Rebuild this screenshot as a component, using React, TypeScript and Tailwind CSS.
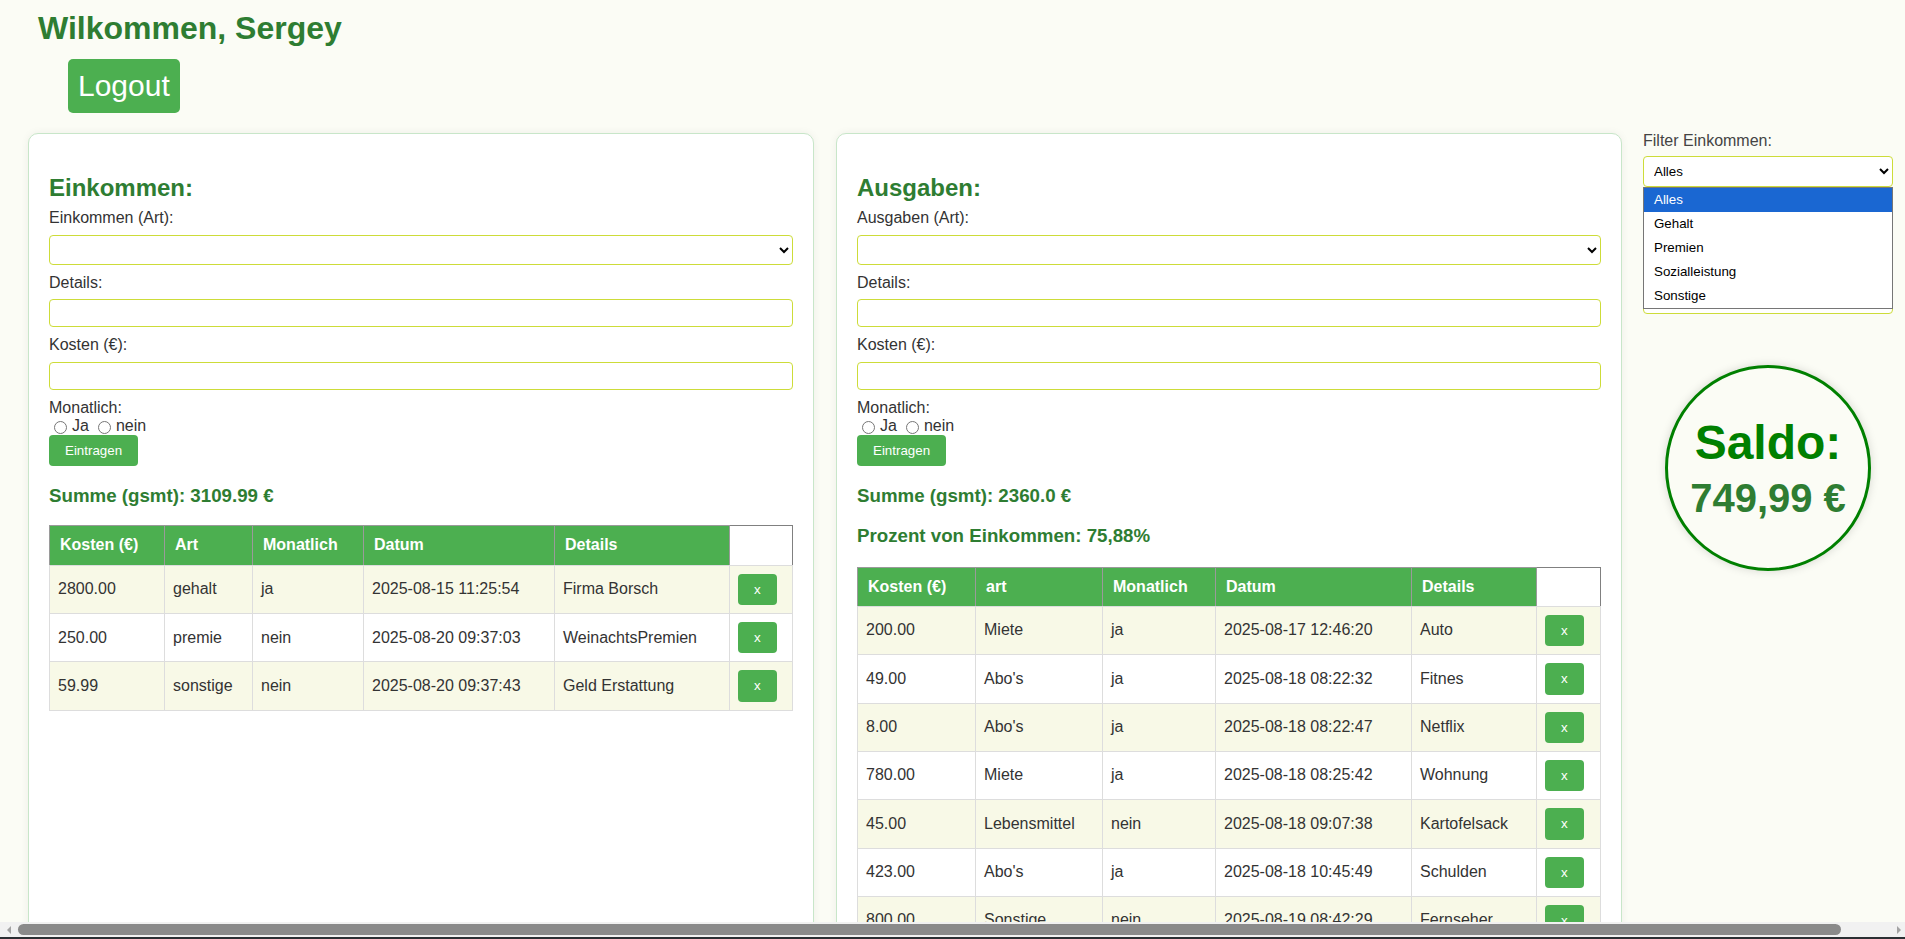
import React from 'react'

const einkommen = [
  { kosten: '2800.00', art: 'gehalt', monatlich: 'ja', datum: '2025-08-15 11:25:54', details: 'Firma Borsch' },
  { kosten: '250.00', art: 'premie', monatlich: 'nein', datum: '2025-08-20 09:37:03', details: 'WeinachtsPremien' },
  { kosten: '59.99', art: 'sonstige', monatlich: 'nein', datum: '2025-08-20 09:37:43', details: 'Geld Erstattung' },
]

const ausgaben = [
  { kosten: '200.00', art: 'Miete', monatlich: 'ja', datum: '2025-08-17 12:46:20', details: 'Auto' },
  { kosten: '49.00', art: "Abo's", monatlich: 'ja', datum: '2025-08-18 08:22:32', details: 'Fitnes' },
  { kosten: '8.00', art: "Abo's", monatlich: 'ja', datum: '2025-08-18 08:22:47', details: 'Netflix' },
  { kosten: '780.00', art: 'Miete', monatlich: 'ja', datum: '2025-08-18 08:25:42', details: 'Wohnung' },
  { kosten: '45.00', art: 'Lebensmittel', monatlich: 'nein', datum: '2025-08-18 09:07:38', details: 'Kartofelsack' },
  { kosten: '423.00', art: "Abo's", monatlich: 'ja', datum: '2025-08-18 10:45:49', details: 'Schulden' },
  { kosten: '800.00', art: 'Sonstige', monatlich: 'nein', datum: '2025-08-19 08:42:29', details: 'Fernseher' },
  { kosten: '55.00', art: 'Sonstige', monatlich: 'nein', datum: '2025-08-19 09:10:12', details: 'Geschenk' },
]

type Row = { kosten: string; art: string; monatlich: string; datum: string; details: string }

function EntryForm({ title, artLabel }: { title: string; artLabel: string }) {
  return (
    <>
      <h2 className="mt-[20px] mb-[8px] text-[24px] leading-[27.6px] font-bold text-[#2e7d32]">{title}</h2>
      <label className="block text-[16px] leading-[18.4px] text-[#333]">{artLabel}</label>
      <select className="block w-full h-[30px] mt-[7px] mb-[9px] border border-[#cddc39] rounded-[4px] bg-white text-[13.33px] px-[4px]">
        <option value=""></option>
      </select>
      <label className="block text-[16px] leading-[18.4px] text-[#333]">Details:</label>
      <input type="text" className="block w-full h-[28px] mt-[7px] mb-[9px] border border-[#cddc39] rounded-[4px] bg-white px-[6px]" />
      <label className="block text-[16px] leading-[18.4px] text-[#333]">Kosten (€):</label>
      <input type="text" className="block w-full h-[28px] mt-[7px] mb-[9px] border border-[#cddc39] rounded-[4px] bg-white px-[6px]" />
      <label className="block text-[16px] leading-[18.4px] text-[#333]">Monatlich:</label>
      <div className="flex items-center h-[18.4px] text-[16px] text-[#333]">
        <input type="radio" name={title} className="ml-[5px] mr-[5px] mt-[2px] w-[13px] h-[13px]" />
        Ja
        <input type="radio" name={title} className="ml-[9px] mr-[5px] mt-[2px] w-[13px] h-[13px]" />
        nein
      </div>
      <button className="h-[31px] px-[16px] bg-[#4caf50] text-white text-[13.33px] rounded-[4px]">Eintragen</button>
    </>
  )
}

function DataTable({ rows, artHead, widths }: { rows: Row[]; artHead: string; widths: string[] }) {
  const th = 'bg-[#4caf50] text-white text-left font-bold text-[16px] leading-[18.4px] px-[10px] py-[10px] border border-[#9a9a9a] border-b-[#ddd]'
  const td = 'text-[16px] leading-[18.4px] text-[#333] px-[8px] py-[8px] border border-[#ddd] align-middle'
  return (
    <table className="w-full table-fixed border-collapse">
      <colgroup>
        <col className={widths[0]} />
        <col className={widths[1]} />
        <col className={widths[2]} />
        <col className={widths[3]} />
        <col className={widths[4]} />
        <col />
      </colgroup>
      <thead>
        <tr>
          <th className={th}>Kosten (€)</th>
          <th className={th}>{artHead}</th>
          <th className={th}>Monatlich</th>
          <th className={th}>Datum</th>
          <th className={th}>Details</th>
          <th className="bg-white border border-[#808080] border-b-[#ddd]"></th>
        </tr>
      </thead>
      <tbody>
        {rows.map((r, i) => (
          <tr key={i} className={i % 2 === 0 ? 'bg-[#f8f9e7]' : 'bg-white'}>
            <td className={td}>{r.kosten}</td>
            <td className={td}>{r.art}</td>
            <td className={td}>{r.monatlich}</td>
            <td className={td}>{r.datum}</td>
            <td className={td}>{r.details}</td>
            <td className={td}>
              <button className="bg-[#4caf50] text-white text-[13.33px] leading-[15.33px] px-[16px] py-[8px] rounded-[4px]">x</button>
            </td>
          </tr>
        ))}
      </tbody>
    </table>
  )
}

export default function App() {
  return (
    <div className="h-[939px] w-full overflow-hidden flex flex-col bg-[#fbfcf5] font-['Liberation_Sans',Arial,sans-serif]">
      <div className="flex-1 min-h-0 overflow-hidden">
        <div className="pl-[38px] pt-[10px]">
          <h1 className="text-[32px] leading-[36.8px] font-bold text-[#2e7d32]">Wilkommen, Sergey</h1>
          <button className="mt-[12px] ml-[30px] h-[54px] px-[10px] bg-[#4caf50] text-white text-[30px] rounded-[5px]">Logout</button>
        </div>

        <div className="flex items-stretch mt-[20px] pl-[28px]">
          <div className="w-[786px] shrink-0 bg-white border border-[#c8e6c9] rounded-[10px] p-[20px] shadow-[0_0_8px_rgba(0,0,0,0.06)]">
            <EntryForm title="Einkommen:" artLabel="Einkommen (Art):" />
            <h3 className="mt-[18.72px] mb-[18.72px] text-[18.72px] leading-[21.5px] font-bold text-[#2e7d32]">Summe (gsmt): 3109.99 €</h3>
            <DataTable rows={einkommen} artHead="Art" widths={['w-[115px]', 'w-[88px]', 'w-[111px]', 'w-[191px]', 'w-[175px]']} />
          </div>

          <div className="w-[786px] shrink-0 ml-[22px] bg-white border border-[#c8e6c9] rounded-[10px] p-[20px] shadow-[0_0_8px_rgba(0,0,0,0.06)]">
            <EntryForm title="Ausgaben:" artLabel="Ausgaben (Art):" />
            <h3 className="mt-[18.72px] mb-[18.72px] text-[18.72px] leading-[21.5px] font-bold text-[#2e7d32]">Summe (gsmt): 2360.0 €</h3>
            <h3 className="mb-[19.72px] text-[18.72px] leading-[21.5px] font-bold text-[#2e7d32]">Prozent von Einkommen: 75,88%</h3>
            <DataTable rows={ausgaben} artHead="art" widths={['w-[118px]', 'w-[127px]', 'w-[113px]', 'w-[196px]', 'w-[125px]']} />
          </div>

          <div className="w-[250px] shrink-0 ml-[21px] -mt-[1px] self-start">
            <label className="block text-[16px] leading-[18.4px] text-[#444]">Filter Einkommen:</label>
            <div className="relative mt-[6px]">
              <select className="block w-full h-[31px] border border-[#cddc39] rounded-[4px] bg-white text-[13.33px] text-black px-[6px]">
                <option>Alles</option>
                <option>Gehalt</option>
                <option>Premien</option>
                <option>Sozialleistung</option>
                <option>Sonstige</option>
              </select>
              <div className="h-[31px] mt-[96px] border border-[#cddc39] rounded-[4px] bg-white"></div>
              <div className="absolute left-0 top-[31px] w-full bg-white border border-[#767676] text-[13.33px] text-black">
                <div className="h-[24px] flex items-center px-[10px] bg-[#1a67d2] text-white">Alles</div>
                <div className="h-[24px] flex items-center px-[10px]">Gehalt</div>
                <div className="h-[24px] flex items-center px-[10px]">Premien</div>
                <div className="h-[24px] flex items-center px-[10px]">Sozialleistung</div>
                <div className="h-[24px] flex items-center px-[10px]">Sonstige</div>
              </div>
            </div>
            <div className="mx-auto mt-[51px] w-[206px] h-[206px] rounded-full border-[3px] border-[#008000] bg-[#fbfcf5] shadow-[0_0_10px_rgba(0,0,0,0.15)] flex flex-col items-center justify-center gap-[5px]">
              <div className="text-[48px] leading-[55px] font-bold text-[#008000]">Saldo:</div>
              <div className="text-[40px] leading-[46px] font-bold text-[#2e7d32]">749,99 €</div>
            </div>
          </div>
        </div>
      </div>

      <div className="h-[15px] shrink-0 bg-[#f1f1f1] flex items-center">
        <div className="w-[18px] flex justify-center">
          <div className="w-0 h-0 border-y-[4px] border-y-transparent border-r-[4px] border-r-[#a3a3a3]"></div>
        </div>
        <div className="flex-1 h-[11px] rounded-full bg-[#8a8a8a]"></div>
        <div className="w-[64px] flex justify-end pr-[4px]">
          <div className="w-0 h-0 border-y-[4px] border-y-transparent border-l-[4px] border-l-[#a3a3a3]"></div>
        </div>
      </div>
      <div className="h-[2px] shrink-0 bg-[#2b2f33]"></div>
    </div>
  )
}
